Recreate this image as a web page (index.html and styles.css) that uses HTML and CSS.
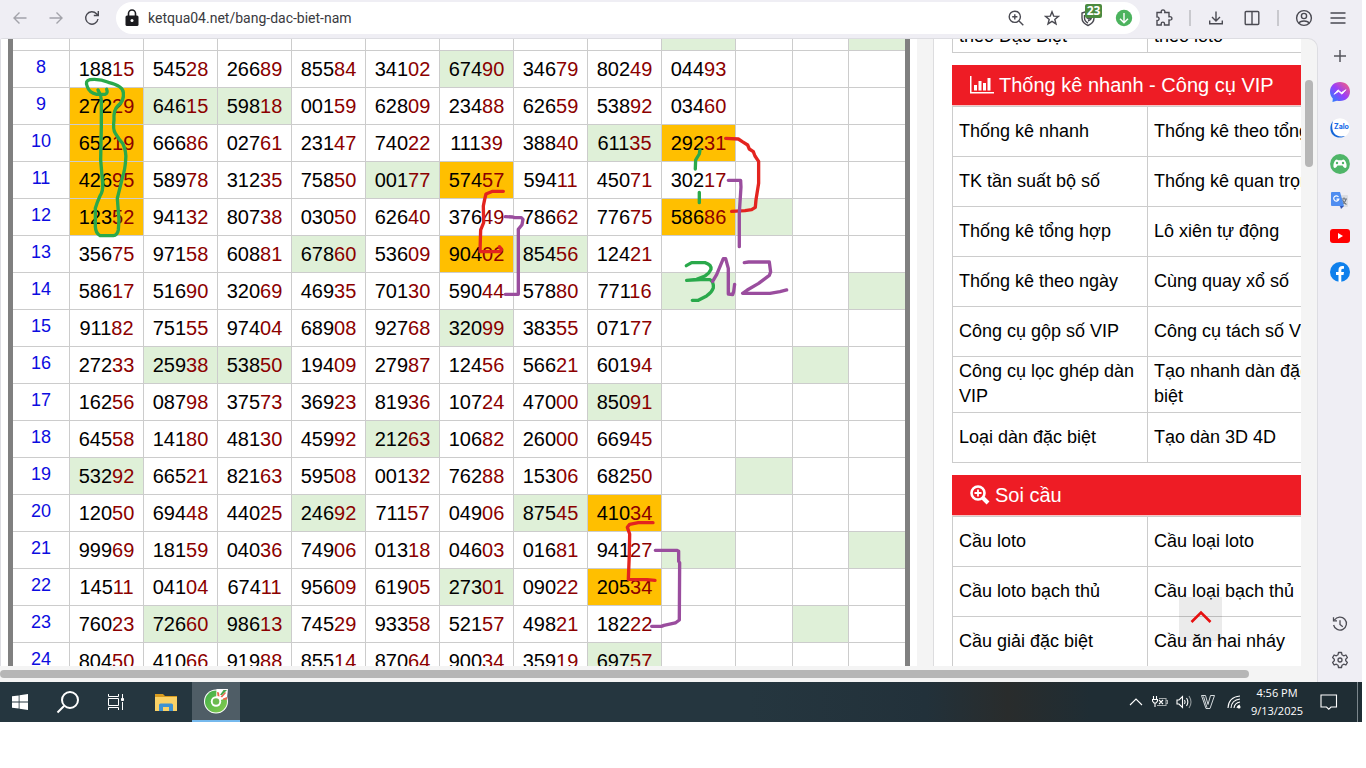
FILE: index.html
```html
<!DOCTYPE html>
<html lang="vi">
<head>
<meta charset="utf-8">
<title>Bảng đặc biệt năm</title>
<link rel="stylesheet" href="styles.css">
</head>
<body>
<header class="toolbar">
  <button class="tool faded" aria-label="Back"><svg width="16" height="16" viewBox="0 0 16 16"><path d="M14.5 8H2M7.500 2.500 2 8l5.500 5.500"/></svg></button>
  <button class="tool faded" aria-label="Forward"><svg width="16" height="16" viewBox="0 0 16 16"><path d="M1.500 8H14M8.500 2.500 14 8l-5.500 5.500"/></svg></button>
  <button class="tool" aria-label="Reload"><svg width="16" height="16" viewBox="0 0 16 16"><path d="M14 9a6.200 6.200 0 1 1-1.500-5.200L14 5.200M14.300 1v4.500H9.800"/></svg></button>
  <div class="address">
    <svg class="lock" width="14" height="18" viewBox="0 0 14 18"><path d="M3.500 8V4.500a3.500 3.500 0 0 1 7 0V8" fill="none" stroke="#1b1b1f" stroke-width="1.600"/><rect x="0.500" y="6.500" width="13" height="10.500" rx="1.500" fill="#1b1b1f"/><circle cx="7" cy="11.500" r="1.500" fill="#fff"/></svg>
    <input class="url" type="text" aria-label="Address" value="ketqua04.net/bang-dac-biet-nam">
    <button class="tool" aria-label="Zoom"><svg width="16" height="16" viewBox="0 0 16 16"><circle cx="6.800" cy="6.800" r="5.600"/><path d="M11 11l4.300 4.300M4.200 6.800h5.200M6.800 4.200v5.200"/></svg></button>
    <button class="tool" aria-label="Bookmark"><svg width="16" height="16" viewBox="0 0 16 16"><path d="M8 1.800l1.700 4.300 4.700.3-3.600 3 1.200 4.500L8 11.400l-4 2.500 1.200-4.500-3.600-3 4.700-.3z"/></svg></button>
    <button class="tool shield" aria-label="Ad blocker"><svg width="16" height="18" viewBox="0 0 16 18"><path d="M8 2L2 4v5c0 3.500 2.500 6 6 7.500 3.500-1.500 6-4 6-7.500V5M4.500 6v3c0 2 1.500 4 3.500 5M8 12c2-.5 3-1.500 3.500-3M6.500 8.500l2 1.500 3-2"/></svg><span class="badge">23</span></button>
    <button class="tool" aria-label="Download video"><svg width="18" height="18" viewBox="0 0 18 18"><circle cx="9" cy="9" r="8.200" fill="#4cb35e" stroke="none"/><path d="M9 4v9.500M5 9.800l4 4 4-4" stroke="#fff"/></svg></button>
  </div>
  <button class="tool" aria-label="Extensions"><svg width="18" height="18" viewBox="0 0 18 18"><path d="M2 3.500h4.300C5.800 1.500 7 .9 8 .9s2.300.7 1.800 2.600H14v4.200c2-.4 2.900.6 2.900 1.700s-1 2-2.900 1.600V16H9.500v-1.200c0-2.200-3.300-2.200-3.300 0V16H2v-4.400c2.800.3 2.800-4 0-3.700z"/></svg></button>
  <span class="divider"></span>
  <button class="tool" aria-label="Downloads"><svg width="16" height="16" viewBox="0 0 16 16"><path d="M8 1.500v9M4 7l4 4 4-4M1.700 10.500v3.300h12.600v-3.300"/></svg></button>
  <button class="tool" aria-label="Split view"><svg width="16" height="16" viewBox="0 0 16 16"><rect x="1.200" y="1.500" width="13.600" height="13" rx="1"/><path d="M8 1.500v13"/></svg></button>
  <span class="divider"></span>
  <button class="tool" aria-label="Profile"><svg width="18" height="18" viewBox="0 0 18 18"><circle cx="9" cy="9" r="7.400"/><circle cx="9" cy="7" r="2.600"/><path d="M4.200 14.300c.6-3 9-3 9.600 0"/></svg></button>
  <button class="tool menu" aria-label="Menu"><svg width="16" height="16" viewBox="0 0 16 16"><path d="M.5 3h15M.5 8h15M.5 13h15"/></svg></button>
</header>

<div class="browser">
<main class="frame">
  <div class="viewport">
    <div class="page">
      <section class="results">
        <table class="year">
          <colgroup><col class="c-day"><col class="c-full" span="9"><col class="c-wide"><col class="c-slim" span="2"></colgroup>
          <tbody>
          <tr><th></th><td></td><td></td><td></td><td></td><td></td><td></td><td></td><td></td><td class="g"></td><td></td><td></td><td class="g"></td></tr>
          <tr><th><a href="#">8</a></th><td>188<b>15</b></td><td>545<b>28</b></td><td>266<b>89</b></td><td>855<b>84</b></td><td>341<b>02</b></td><td class="g">674<b>90</b></td><td>346<b>79</b></td><td>802<b>49</b></td><td>044<b>93</b></td><td></td><td></td><td></td></tr>
          <tr><th><a href="#">9</a></th><td class="o">272<b>29</b></td><td class="g">646<b>15</b></td><td class="g">598<b>18</b></td><td>001<b>59</b></td><td>628<b>09</b></td><td>234<b>88</b></td><td>626<b>59</b></td><td>538<b>92</b></td><td>034<b>60</b></td><td></td><td></td><td></td></tr>
          <tr><th><a href="#">10</a></th><td class="o">652<b>19</b></td><td>666<b>86</b></td><td>027<b>61</b></td><td>231<b>47</b></td><td>740<b>22</b></td><td>111<b>39</b></td><td>388<b>40</b></td><td class="g">611<b>35</b></td><td class="o">292<b>31</b></td><td></td><td></td><td></td></tr>
          <tr><th><a href="#">11</a></th><td class="o">426<b>95</b></td><td>589<b>78</b></td><td>312<b>35</b></td><td>758<b>50</b></td><td class="g">001<b>77</b></td><td class="o">574<b>57</b></td><td>594<b>11</b></td><td>450<b>71</b></td><td>302<b>17</b></td><td></td><td></td><td></td></tr>
          <tr><th><a href="#">12</a></th><td class="o">123<b>52</b></td><td>941<b>32</b></td><td>807<b>38</b></td><td>030<b>50</b></td><td>626<b>40</b></td><td>376<b>49</b></td><td>786<b>62</b></td><td>776<b>75</b></td><td class="o">586<b>86</b></td><td class="g"></td><td></td><td></td></tr>
          <tr><th><a href="#">13</a></th><td>356<b>75</b></td><td>971<b>58</b></td><td>608<b>81</b></td><td class="g">678<b>60</b></td><td>536<b>09</b></td><td class="o">904<b>02</b></td><td class="g">854<b>56</b></td><td>124<b>21</b></td><td></td><td></td><td></td><td></td></tr>
          <tr><th><a href="#">14</a></th><td>586<b>17</b></td><td>516<b>90</b></td><td>320<b>69</b></td><td>469<b>35</b></td><td>701<b>30</b></td><td>590<b>44</b></td><td>578<b>80</b></td><td>771<b>16</b></td><td class="g"></td><td></td><td></td><td class="g"></td></tr>
          <tr><th><a href="#">15</a></th><td>911<b>82</b></td><td>751<b>55</b></td><td>974<b>04</b></td><td>689<b>08</b></td><td>927<b>68</b></td><td class="g">320<b>99</b></td><td>383<b>55</b></td><td>071<b>77</b></td><td></td><td></td><td></td><td></td></tr>
          <tr><th><a href="#">16</a></th><td>272<b>33</b></td><td class="g">259<b>38</b></td><td class="g">538<b>50</b></td><td>194<b>09</b></td><td>279<b>87</b></td><td>124<b>56</b></td><td>566<b>21</b></td><td>601<b>94</b></td><td></td><td></td><td class="g"></td><td></td></tr>
          <tr><th><a href="#">17</a></th><td>162<b>56</b></td><td>087<b>98</b></td><td>375<b>73</b></td><td>369<b>23</b></td><td>819<b>36</b></td><td>107<b>24</b></td><td>470<b>00</b></td><td class="g">850<b>91</b></td><td></td><td></td><td></td><td></td></tr>
          <tr><th><a href="#">18</a></th><td>645<b>58</b></td><td>141<b>80</b></td><td>481<b>30</b></td><td>459<b>92</b></td><td class="g">212<b>63</b></td><td>106<b>82</b></td><td>260<b>00</b></td><td>669<b>45</b></td><td></td><td></td><td></td><td></td></tr>
          <tr><th><a href="#">19</a></th><td class="g">532<b>92</b></td><td>665<b>21</b></td><td>821<b>63</b></td><td>595<b>08</b></td><td>001<b>32</b></td><td>762<b>88</b></td><td>153<b>06</b></td><td>682<b>50</b></td><td></td><td class="g"></td><td></td><td></td></tr>
          <tr><th><a href="#">20</a></th><td>120<b>50</b></td><td>694<b>48</b></td><td>440<b>25</b></td><td class="g">246<b>92</b></td><td>711<b>57</b></td><td>049<b>06</b></td><td class="g">875<b>45</b></td><td class="o">410<b>34</b></td><td></td><td></td><td></td><td></td></tr>
          <tr><th><a href="#">21</a></th><td>999<b>69</b></td><td>181<b>59</b></td><td>040<b>36</b></td><td>749<b>06</b></td><td>013<b>18</b></td><td>046<b>03</b></td><td>016<b>81</b></td><td>941<b>27</b></td><td class="g"></td><td></td><td></td><td class="g"></td></tr>
          <tr><th><a href="#">22</a></th><td>145<b>11</b></td><td>041<b>04</b></td><td>674<b>11</b></td><td>956<b>09</b></td><td>619<b>05</b></td><td class="g">273<b>01</b></td><td>090<b>22</b></td><td class="o">205<b>34</b></td><td></td><td></td><td></td><td></td></tr>
          <tr><th><a href="#">23</a></th><td>760<b>23</b></td><td class="g">726<b>60</b></td><td class="g">986<b>13</b></td><td>745<b>29</b></td><td>933<b>58</b></td><td>521<b>57</b></td><td>498<b>21</b></td><td>182<b>22</b></td><td></td><td></td><td class="g"></td><td></td></tr>
          <tr><th><a href="#">24</a></th><td>804<b>50</b></td><td>410<b>66</b></td><td>919<b>88</b></td><td>855<b>14</b></td><td>870<b>64</b></td><td>900<b>34</b></td><td>359<b>19</b></td><td class="g">697<b>57</b></td><td></td><td></td><td></td><td></td></tr>
          </tbody>
        </table>
      </section>
      <aside class="links">
        <table class="list first">
          <tr><td><a href="#">theo Đặc Biệt</a></td><td><a href="#">theo loto</a></td></tr>
        </table>
        <h2 class="head"><svg width="24" height="18" viewBox="0 0 24 18" fill="#fff"><path d="M0 0h1.500v16H24v1.500H0zM4 9h3v5.500H4zM8.500 5h3v9.500h-3zM13 7h3v7.500h-3zM17.500 2h3v12.500h-3z"/></svg>Thống kê nhanh - Công cụ VIP</h2>
        <table class="list">
          <tr><td><a href="#">Thống kê nhanh</a></td><td><a href="#">Thống kê theo tổng</a></td></tr>
          <tr><td><a href="#">TK tần suất bộ số</a></td><td><a href="#">Thống kê quan trọng</a></td></tr>
          <tr><td><a href="#">Thống kê tổng hợp</a></td><td><a href="#">Lô xiên tự động</a></td></tr>
          <tr><td><a href="#">Thống kê theo ngày</a></td><td><a href="#">Cùng quay xổ số</a></td></tr>
          <tr><td><a href="#">Công cụ gộp số VIP</a></td><td><a href="#">Công cụ tách số VIP</a></td></tr>
          <tr><td><a href="#">Công cụ lọc ghép dàn VIP</a></td><td><a href="#">Tạo nhanh dàn đặc biệt</a></td></tr>
          <tr><td><a href="#">Loại dàn đặc biệt</a></td><td><a href="#">Tạo dàn 3D 4D</a></td></tr>
        </table>
        <h2 class="head"><svg width="20" height="20" viewBox="0 0 20 20" fill="none" stroke="#fff"><circle cx="8" cy="8" r="6.500" stroke-width="2.600"/><path d="M13 13l5 5" stroke-width="4"/><path d="M4.500 8h7M8 4.500v7" stroke-width="1.800"/></svg>Soi cầu</h2>
        <table class="list">
          <tr><td><a href="#">Cầu loto</a></td><td><a href="#">Cầu loại loto</a></td></tr>
          <tr><td><a href="#">Cầu loto bạch thủ</a></td><td><a href="#">Cầu loại bạch thủ</a></td></tr>
          <tr><td><a href="#">Cầu giải đặc biệt</a></td><td><a href="#">Cầu ăn hai nháy</a></td></tr>
        </table>
      </aside>
    </div>
    <svg class="ink" width="1300" height="627" viewBox="1 39 1300 627">
      <g transform="translate(0 60) scale(.3333)">
        <path class="green" d="M320 88Q325 100 315 103H290Q268 98 262 80 254 62 270 59 300 56 325 67 370 78 370 98 373 122 355 136 340 150 342 180 338 208 346 220 358 240 368 250 380 275 377 300 375 330 368 350L352 415 357 480 355 510Q352 526 340 527H300Q287 520 286 500V445Q292 425 300 408 310 392 308 370L302 300 304 200V120Q304 105 294 90"/>
      </g>
      <g transform="translate(430 120) scale(.3333)">
        <path class="red" d="M887 55L925 57 937 65 953 75 958 87 970 95 975 108 986 124V190L978 240 976 262 965 269 945 272 905 274"/>
        <path class="purple" d="M895 181H932L933 201 928 280V380"/>
        <path class="green" d="M810 90L808 102 797 120 796 147M808 217V248"/>
        <path class="red" d="M220 214H188L168 222 164 238 160 258 161 308 152 330 150 395H210L215 388 208 380"/>
        <path class="purple" d="M226 290L248 291 254 293H274L279 298 276 314 265 328V523H226"/>
        <path class="green" d="M769 437L785 428H825Q845 434 843 448 838 460 825 468L800 478 770 481 812 479H840Q852 486 850 504 845 518 830 528L805 541H787"/>
        <path class="purple" d="M848 484L860 464 880 416H887L895 445V522L908 524 911 515 914 493M943 428L956 426H1018L1022 456 1018 466 986 490 952 510 938 520H1020L1050 515 1070 510"/>
      </g>
      <g transform="translate(560 490) scale(.3333)">
        <path class="red" d="M279 98H235L209 103 202 112 209 132 208 192 205 268 261 269 285 271"/>
        <path class="purple" d="M286 181H350L356 184V214L359 218 358 390 346 399 312 406 304 409H275"/>
      </g>
    </svg>
    <button class="totop" aria-label="Back to top"><svg width="22" height="14" viewBox="0 0 22 14"><path d="M1.500 12L11 2.500l9.500 9.500" fill="none" stroke="#e60f0f" stroke-width="2.600"/></svg></button>
  </div>
  <div class="vbar"><div class="vthumb"></div></div>
  <div class="hbar"><div class="hthumb"></div></div>
</main>
<nav class="rail">
  <button class="app" aria-label="Add"><svg width="14" height="14" viewBox="0 0 14 14"><path d="M7 1v12M1 7h12" stroke="#55555c" stroke-width="1.500"/></svg></button>
  <button class="app" aria-label="Messenger"><svg width="20" height="20" viewBox="0 0 20 20"><defs><linearGradient id="ms" x1="0" y1="1" x2="1" y2="0"><stop offset="0" stop-color="#1a8bff"/><stop offset=".5" stop-color="#9a3dfa"/><stop offset="1" stop-color="#ff6470"/></linearGradient></defs><path d="M10 0c6 0 10 4.200 10 9.600s-4 9.500-10 9.500c-1 0-2-.1-3-.4L2.500 20l.3-3.500C1 14.800 0 12.400 0 9.600 0 4.200 4 0 10 0z" fill="url(#ms)"/><path d="M4 12.300l4-4.500 3.300 2.800 4.700-2.900-4 4.500-3.300-2.700z" fill="#fff" stroke="#fff" stroke-width=".8"/></svg></button>
  <button class="app" aria-label="Zalo"><svg width="20" height="20" viewBox="0 0 20 20"><circle cx="10" cy="10" r="9.800" fill="#fff"/><path d="M3 3C-1 8 0 14 3 17c4 3.500 9 3 12 1-5 1-9 0-11-3C1.500 11.500 2 6 3 3z" fill="#1466d8"/><text x="4" y="11" font-family="Inter, sans-serif" font-size="7" font-weight="700" fill="#1466e8">Zalo</text></svg></button>
  <button class="app" aria-label="Games"><svg width="20" height="20" viewBox="0 0 20 20"><circle cx="10" cy="10" r="9.900" fill="#4fb568"/><path d="M5.500 6Q7 5 8 6.300h4Q13 5 14.500 6c1.500 1.500 2.500 4.500 2 7-1.200 2-2.800.5-4-1.500h-5c-1.200 2-2.800 3.500-4 1.500-.5-2.500.5-5.500 2-7z" fill="#fff"/><circle cx="7" cy="9" r="1.200" fill="#4fb568"/><circle cx="13" cy="9" r="1.200" fill="#4fb568"/></svg></button>
  <button class="app" aria-label="Translate"><svg width="20" height="20" viewBox="0 0 20 20"><rect x="9" y="5" width="9" height="12" rx="1" fill="#dcdde2"/><path d="M11 9h6M14 7.500V9m2 0q-.5 3.500-4.500 5.500M12.500 10q1 3 4 4.500" fill="none" stroke="#6d747d" stroke-width="1.200"/><path d="M2 2h8l4 14H2a1 1 0 0 1-1-1V3a1 1 0 0 1 1-1z" fill="#4f8df0"/><path d="M10 16h4l-3 3z" fill="#3457b5"/><path d="M8.500 7a2.600 2.600 0 1 0 .3 2.200H6.500" fill="none" stroke="#fff" stroke-width="1.200"/></svg></button>
  <button class="app" aria-label="YouTube"><svg width="20" height="14" viewBox="0 0 20 14"><rect width="20" height="14" rx="3" fill="#f00"/><path d="M8 4l5 3-5 3z" fill="#fff"/></svg></button>
  <button class="app" aria-label="Facebook"><svg width="20" height="20" viewBox="0 0 20 20"><circle cx="10" cy="10" r="10" fill="#0f80ec"/><path d="M8.500 19.900V13H6v-3h2.500V8c0-2.600 1.500-4 3.800-4 .8 0 1.700.2 1.700.2v2.500h-1.200c-1.200 0-1.500.8-1.500 1.500V10H14l-.5 3h-2.200v6.900z" fill="#fff"/></svg></button>
  <span class="spacer"></span>
  <button class="app" aria-label="History"><svg width="16" height="16" viewBox="0 0 16 16" fill="none" stroke="#4d4d55" stroke-width="1.300"><path d="M2.500 4a6.500 6.500 0 1 1-.9 5M1.500 1.300v3.500H5M8 4.200V8.500l2.800 2.300"/></svg></button>
  <button class="app" aria-label="Settings"><svg width="18" height="18" viewBox="0 0 18 18" fill="none" stroke="#4d4d55" stroke-width="1.300" stroke-linejoin="round"><path d="M7.500 1.500h3l.5 2.300 1.700 1 2.200-.8 1.500 2.600L14.700 8.200v1.600l1.700 1.600-1.500 2.600-2.200-.8-1.700 1-.5 2.300h-3L7 14.200l-1.700-1-2.200.8-1.500-2.600 1.700-1.600V8.200L1.600 6.600 3.100 4l2.200.8 1.700-1z"/><circle cx="9" cy="9" r="2"/></svg></button>
</nav>
</div>

<footer class="taskbar">
  <button class="task start" aria-label="Start"><svg width="16" height="16" viewBox="0 0 16 16" fill="#fff"><path d="M0 2.300l6.700-.9v6.200H0zM7.500 1.200L16 0v7.600H7.500zM0 8.400h6.700v6.200L0 13.700zM7.500 8.400H16V16l-8.500-1.200z"/></svg></button>
  <button class="task" aria-label="Search"><svg width="24" height="24" viewBox="0 0 24 24" fill="none" stroke="#fff" stroke-width="2"><circle cx="14" cy="10" r="8"/><path d="M8 16l-6.500 6.500"/></svg></button>
  <button class="task" aria-label="Task view"><svg width="18" height="16" viewBox="0 0 18 16" fill="none" stroke="#fff"><path d="M1.500 0v2.500h10V0M1.500 16v-2.500h10V16M1.500 4.500h10v7h-10zM15.500 0v4M15.500 8v8"/><path d="M14.500 4.500h2v2h-2z" fill="#fff"/></svg></button>
  <button class="task files" aria-label="File Explorer"><svg width="22" height="19" viewBox="0 0 22 19"><path d="M0 1h8l2 2h12v5H0z" fill="#d99c1f"/><path d="M0 4h22v14H0z" fill="#fbd266"/><path d="M4 18v-6q0-1.500 1.500-1.500h11q1.500 0 1.500 1.500v6h-4v-4H8v4z" fill="#3f92d2"/></svg></button>
  <button class="task active" aria-label="Browser"><svg width="26" height="26" viewBox="0 0 26 26"><defs><linearGradient id="cc" x1="0" y1="0" x2="1" y2="1"><stop offset="0" stop-color="#3fae49"/><stop offset="1" stop-color="#86cc4e"/></linearGradient></defs><circle cx="13" cy="13.500" r="12" fill="#fff"/><circle cx="13" cy="13.500" r="11" fill="url(#cc)"/><path d="M13 13.500L13.500 1H25l-1 9z" fill="#fff"/><path d="M14.500 8L14 4l2 .5.500 4zM17.500 8.500L22 4l1 1-4 4.500zM20 10.500l4-1.500v2.500l-4 .5z" fill="#e9664d"/><path d="M17 7l3.500-5H24l-5 5z" fill="#45a649"/><circle cx="13" cy="13.500" r="5.200" fill="#fff"/><circle cx="13" cy="13.500" r="3.300" fill="#6cba50"/></svg></button>
  <span class="spacer"></span>
  <button class="tray" aria-label="Show hidden icons"><svg width="14" height="8" viewBox="0 0 14 8"><path d="M1 7l6-6 6 6"/></svg></button>
  <button class="tray" aria-label="Battery"><svg width="16" height="12" viewBox="0 0 16 12"><path d="M1.500 0v3M4.500 0v3M0.500 3.500h5V5L4 7H2L.5 5zM3 7v4M7 4l4 4M11 4L7 8"/><path d="M7 2.500h7v7H5M14.500 4.500h1v3h-1" opacity=".6"/></svg></button>
  <button class="tray" aria-label="Volume"><svg width="16" height="14" viewBox="0 0 16 14"><path d="M1 5h2l3.500-3.500v11L3 9H1zM8.500 5q1.300 2 0 4M10.500 3q2.700 4 0 8"/><path d="M13 1q4 6 0 12" opacity=".5"/></svg></button>
  <button class="tray" aria-label="Input method"><svg width="14" height="14" viewBox="0 0 14 14"><path class="thin" d="M.5.5h4L7 9.500l2.500-9h4L9 13.500H5zM2.500 1.500l3.500 11"/></svg></button>
  <button class="tray wifi" aria-label="Network"><svg width="14" height="14" viewBox="0 0 14 14"><path d="M1 13Q1.500 2 13 1M4 13Q4.500 5 13 4M7 13q.5-5 6-6M10 13q.5-2.500 3-3"/><circle cx="12" cy="12" r="1" fill="#fff"/></svg></button>
  <div class="clock"><span>4:56 PM</span><span>9/13/2025</span></div>
  <button class="note" aria-label="Notifications"><svg width="18" height="16" viewBox="0 0 18 16"><path d="M1 1h15.500v12H11l-2.200 2.200L6.500 13H1z"/></svg></button>
  <span class="edge"></span>
</footer>
</body>
</html>
```
FILE: styles.css
```css
* { box-sizing: border-box; }
body {
  margin: 0;
  height: 100vh;
  padding: 0 4px 46px 0;
  display: flex;
  flex-direction: column;
  background: #fff;
  font-family: "Liberation Sans", Arial, sans-serif;
  overflow: hidden;
}
button { border: 0; padding: 0; background: none; }
svg { display: block; }
a { color: inherit; text-decoration: none; }
.spacer { flex: 1; }

/* Browser toolbar */
.toolbar {
  flex: none;
  height: 38px;
  display: flex;
  align-items: center;
  gap: 4px;
  padding: 0 10px 2px 4px;
  background: #efeef4;
}
.tool {
  flex: none;
  width: 32px;
  height: 32px;
  display: grid;
  place-items: center;
}
.tool svg { fill: none; stroke: #4a4a52; stroke-width: 1.4; }
.tool.faded svg { stroke: #a3a3aa; }
.tool.menu { width: 28px; }
.address {
  flex: 1;
  height: 32px;
  margin: 0 4px;
  padding-left: 9px;
  display: flex;
  align-items: center;
  gap: 4px;
  border-radius: 16px;
  background: #fff;
}
.lock { flex: none; }
.url {
  flex: 1;
  border: 0;
  outline: 0;
  padding: 0 5px;
  background: none;
  font: 14px Roboto, "Noto Sans", sans-serif;
  color: #3a3a40;
}
.shield { position: relative; }
.badge {
  position: absolute;
  top: 2px;
  right: 2px;
  width: 17px;
  height: 14px;
  border-radius: 2px;
  background: #4b8a3f;
  color: #fff;
  font: bold 12px/14px "Open Sans", sans-serif;
  text-align: center;
}
.divider { width: 2px; height: 16px; margin: 0 5px; background: #c9c9ce; }

/* Page frame and scrollbars */
.browser { flex: 1; min-height: 0; display: flex; background: #efeef4; }
.frame {
  flex: 1;
  min-width: 0;
  display: grid;
  grid-template-columns: minmax(0, 1fr) 16px;
  grid-template-rows: minmax(0, 1fr) 16px;
  border-top: 1px solid #dddde2;
  border-right: 1px solid #dddde2;
  border-radius: 3px 10px 0 0;
  background: #f4f4f4;
  overflow: hidden;
}
.viewport { position: relative; overflow: hidden; border-left: 1px solid #dddde2; }
.vbar { padding: 41px 4px 0; }
.vthumb { height: 87px; border-radius: 4px; background: #b6b6b6; }
.hbar { grid-column: 1 / 3; padding: 4px 68px 4px 0; }
.hthumb { height: 8px; border-radius: 4px; background: #b6b6b6; }

/* Scrolled page */
.page { display: flex; gap: 16px; margin-top: -25px; width: max-content; }
.results { padding: 0 7px; background: #fff; }
.year {
  width: 902px;
  table-layout: fixed;
  border-collapse: separate;
  border-spacing: 0;
  border: solid #808080;
  border-width: 0 5px;
  font-size: 20px;
}
.c-day, .c-wide { width: 57px; }
.c-full { width: 74px; }
.c-slim { width: 56px; }
.year th, .year td {
  height: 37px;
  padding: 0;
  border: solid #ccc;
  border-width: 0 1px 1px 0;
  text-align: center;
  line-height: 24px;
}
.year th { padding-bottom: 4px; font-size: 18px; font-weight: normal; color: #0c0ce0; }
.year td:last-child { border-right: 0; }
.year b { font-weight: normal; color: #8b0000; }
.year .g { background: #dff0d8; }
.year .o { background: #ffbf00; }

.links { padding: 0 18px; border-left: 1px solid #dddddf; background: #fff; }
.list {
  width: 391px;
  margin-bottom: 12px;
  table-layout: fixed;
  border-collapse: separate;
  border-spacing: 0;
  border: solid #ccc;
  border-width: 1px 1px 0 0;
  font-size: 18px;
  line-height: 25px;
}
.list td {
  height: 50px;
  padding: 2px 6px 3px;
  border: solid #ccc;
  border-width: 0 0 1px 1px;
}
.list.first { border-top: 0; }
.list.first td { height: 39px; vertical-align: bottom; }
.head {
  height: 41px;
  margin: 0;
  padding-left: 18px;
  display: flex;
  align-items: center;
  gap: 5px;
  border-bottom: 1px solid #f6c4c4;
  background: #ee1c25;
  color: #fff;
  font-size: 20px;
  font-weight: normal;
}
.ink { position: absolute; top: 0; left: 0; pointer-events: none; }
.ink path { fill: none; stroke-width: 10; stroke-linecap: round; stroke-linejoin: round; }
.green { stroke: #2aa94b; }
.red { stroke: #e3241f; }
.purple { stroke: #9a4d9e; }
.totop {
  position: absolute;
  right: 79px;
  bottom: 25px;
  width: 43px;
  height: 44px;
  padding-bottom: 4px;
  display: grid;
  place-items: center;
  background: rgba(0, 0, 0, .08);
}

/* Side rail */
.rail { flex: none; width: 44px; padding-bottom: 4px; display: flex; flex-direction: column; }
.app { height: 36px; display: grid; place-items: center; }

/* Taskbar */
.taskbar {
  flex: none;
  height: 40px;
  display: flex;
  align-items: stretch;
  background: linear-gradient(90deg, #25363f 0%, #25363f 55%, #22313a 68%, #292c2c 74%, #1f2d34 80%, #1f2d34 100%);
  color: #fff;
}
.task { width: 48px; display: grid; place-items: center; }
.task.start { width: 40px; margin-right: 4px; }
.task.files { width: 52px; }
.task.active { background: #4f5d66; border-bottom: 2px solid #76b9ed; }
.tray { width: 24px; display: grid; place-items: center; }
.tray.wifi { width: 28px; }
.tray svg, .note svg { fill: none; stroke: #fff; stroke-width: 1.1; }
.tray .thin { stroke-width: 1; stroke: #d5dadd; }
.clock {
  width: 58px;
  display: flex;
  flex-direction: column;
  justify-content: center;
  text-align: center;
  font: 11px/18px "Open Sans", "Noto Sans", sans-serif;
}
.note { width: 46px; display: grid; place-items: center; }
.edge { width: 1px; margin: 0 4px 0 5px; background: #7b868c; }
```
